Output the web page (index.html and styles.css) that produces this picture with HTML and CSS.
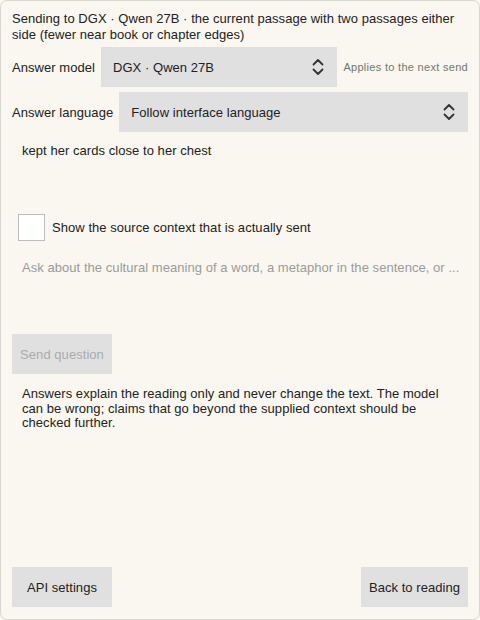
FILE: index.html
```html
<!DOCTYPE html>
<html lang="en">
<head>
<meta charset="utf-8">
<title>Ask about the passage</title>
<link rel="stylesheet" href="styles.css">
</head>
<body>
<div class="window">
  <p class="intro">Sending to DGX · Qwen 27B · the current passage with two passages either side (fewer near book or chapter edges)</p>

  <div class="field-row">
    <span class="field-label">Answer model</span>
    <div class="select select-model">
      <span class="select-value">DGX · Qwen 27B</span>
      <svg class="chevrons" width="12" height="18" viewBox="0 0 12 18"><polyline points="1.5,6.5 6,2 10.5,6.5"/><polyline points="1.5,11.5 6,16 10.5,11.5"/></svg>
    </div>
    <span class="hint">Applies to the next send</span>
  </div>

  <div class="field-row">
    <span class="field-label">Answer language</span>
    <div class="select select-language">
      <span class="select-value">Follow interface language</span>
      <svg class="chevrons" width="12" height="18" viewBox="0 0 12 18"><polyline points="1.5,6.5 6,2 10.5,6.5"/><polyline points="1.5,11.5 6,16 10.5,11.5"/></svg>
    </div>
  </div>

  <div class="quote">kept her cards close to her chest</div>

  <label class="check-row">
    <span class="checkbox"></span>
    <span class="check-label">Show the source context that is actually sent</span>
  </label>

  <div class="question">Ask about the cultural meaning of a word, a metaphor in the sentence, or ...</div>

  <div class="send-row">
    <button class="btn btn-disabled" disabled>Send question</button>
  </div>

  <p class="note">Answers explain the reading only and never change the text. The model can be wrong; claims that go beyond the supplied context should be checked further.</p>

  <div class="footer">
    <button class="btn">API settings</button>
    <button class="btn">Back to reading</button>
  </div>
</div>
</body>
</html>
```

FILE: styles.css
```css
* { box-sizing: border-box; }

html, body {
  margin: 0;
  padding: 0;
  background: #f9f7f0;
}

body {
  font-family: "Liberation Sans", Arial, sans-serif;
  font-size: 13px;
  letter-spacing: 0.05px;
  color: #222222;
}

.window {
  width: 480px;
  height: 620px;
  border: 1px solid #d8d8d0;
  border-radius: 7px;
  padding: 10px 11px 12px 11px;
  display: flex;
  flex-direction: column;
  background: #f9f7f0;
}

.intro {
  margin: 0;
  line-height: 16px;
}

.field-row {
  display: flex;
  align-items: center;
  gap: 6px;
  margin-top: 4px;
}

.field-row + .field-row {
  margin-top: 5px;
}

.field-label {
  white-space: nowrap;
}

.select {
  height: 40px;
  background: #e0e0e0;
  display: flex;
  align-items: center;
  justify-content: space-between;
  padding: 0 13px 0 12px;
}

.select-model {
  width: 239px;
}

.select-language {
  flex: 1;
}

.chevrons {
  fill: none;
  stroke: #333333;
  stroke-width: 1.8;
  stroke-linecap: round;
  stroke-linejoin: round;
}

.hint {
  font-size: 11px;
  letter-spacing: 0.3px;
  color: #6f7a6c;
  white-space: nowrap;
}

.quote {
  height: 72px;
  padding: 11px 10px;
  line-height: 16px;
}

.check-row {
  display: flex;
  align-items: center;
  gap: 7px;
  margin-top: 10px;
  padding-left: 6px;
}

.checkbox {
  width: 27px;
  height: 27px;
  background: #ffffff;
  border: 1px solid #bdbdbd;
}

.question {
  height: 93px;
  padding: 19px 10px 0 10px;
  line-height: 16px;
  color: #9b9b9b;
  white-space: nowrap;
}

.btn {
  font: inherit;
  letter-spacing: 0.05px;
  color: #222222;
  background: #e0e0e0;
  border: none;
  border-radius: 0;
  height: 40px;
  min-width: 100px;
  padding: 0 8px;
}

.btn-disabled {
  color: #ababab;
}

.note {
  margin: 13px 0 0 0;
  padding: 0 10px;
  line-height: 14.5px;
}

.footer {
  margin-top: auto;
  display: flex;
  justify-content: space-between;
}
```
